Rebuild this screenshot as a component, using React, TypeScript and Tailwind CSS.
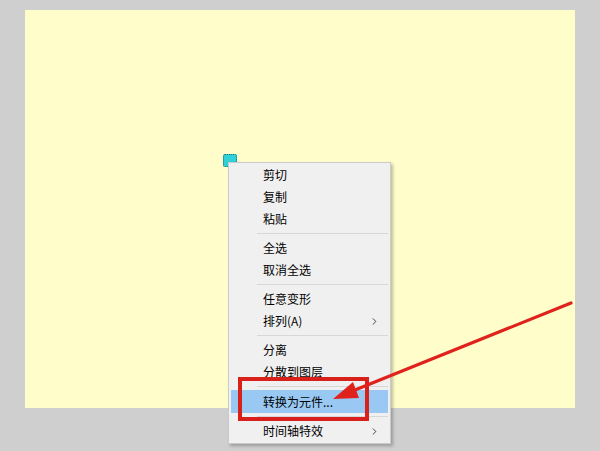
import React from "react";
import { ChevronRight } from "lucide-react";

// Menu entries: null = separator line
type Item = { label: string; sub?: boolean; active?: boolean } | null;

const menuItems: Item[] = [
  { label: "剪切" },
  { label: "复制" },
  { label: "粘贴" },
  null,
  { label: "全选" },
  { label: "取消全选" },
  null,
  { label: "任意变形" },
  { label: "排列(A)", sub: true },
  null,
  { label: "分离" },
  { label: "分散到图层" },
  null,
  { label: "转换为元件...", active: true },
  null,
  { label: "时间轴特效", sub: true },
];

const ContextMenu: React.FC = () => (
  <div className="absolute left-[228px] top-[162px] flex w-[163px] flex-col border border-[#cbcbcb] bg-[#f0f0f0] py-[1px] shadow-[2px_2px_3px_rgba(0,0,0,0.25)]">
    {menuItems.map((item, i) =>
      item === null ? (
        <div key={i} className="flex h-[7px] items-center pl-[28px] pr-[2px]">
          <div className="h-px w-full bg-[#d7d7d7]" />
        </div>
      ) : (
        <div
          key={i}
          className={`mx-[2px] flex h-[22px] items-center pl-[32px] pr-[8px] text-[12px] text-black ${
            item.active ? "h-[23px] bg-[#99c9f3]" : ""
          }`}
        >
          <span className="flex-1">{item.label}</span>
          {item.sub && <ChevronRight size={11} strokeWidth={1.8} className="text-[#222]" />}
        </div>
      )
    )}
  </div>
);

export default function App() {
  return (
    <div
      className="relative h-[451px] w-[600px] overflow-hidden bg-[#cfcfcf] pt-[10px] pl-[25px]"
      style={{ fontFamily: '"Noto Sans CJK SC", "Microsoft YaHei", sans-serif' }}
    >
      {/* 舞台 */}
      <div className="h-[398px] w-[550px] bg-[#fffdca]" />

      {/* 选中的小对象 */}
      <div className="absolute left-[223px] top-[154px] h-[13px] w-[14px] rounded-[2px] border border-dotted border-[#1c6f78] bg-[#2fd0d8]" />

      <ContextMenu />

      {/* 红框 */}
      <div className="absolute left-[238px] top-[377px] h-[44px] w-[131px] border-[4px] border-[#d9211c]" />

      {/* 箭头 */}
      <svg className="absolute left-0 top-0" width="600" height="451">
        <line x1="571" y1="303" x2="350" y2="392" stroke="#e0221c" strokeWidth="3.2" strokeLinecap="round" />
        <polygon points="333,399 353,382 359,398" fill="#e0221c" />
      </svg>
    </div>
  );
}
